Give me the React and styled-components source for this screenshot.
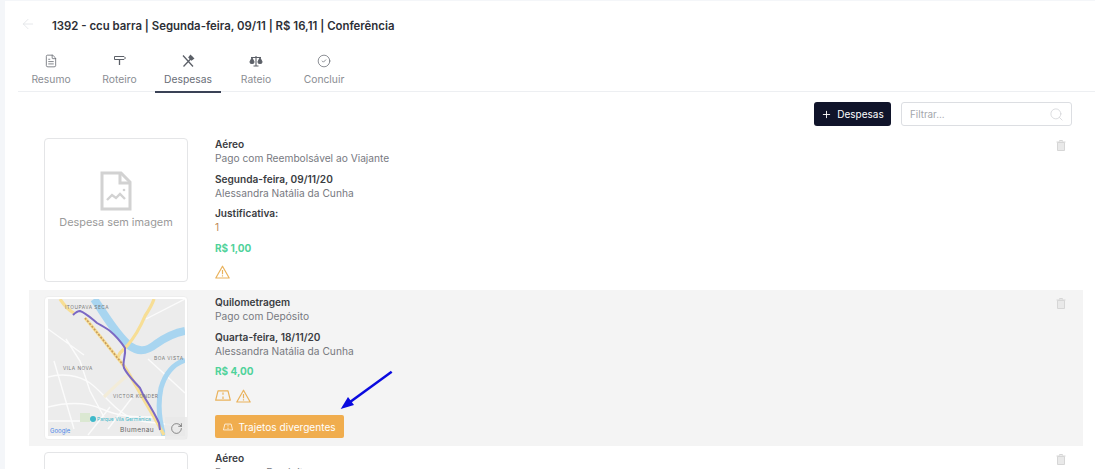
import React from "react";
import styled, { createGlobalStyle } from "styled-components";
import { FileText, Search, Plus, ArrowLeft, CircleCheck, RotateCw } from "lucide-react";

const Global = createGlobalStyle`
  html, body { margin: 0; padding: 0; background: #f4f6f9; }
  body { font-family: "Inter", "Open Sans", sans-serif; overflow: hidden; }
`;

const Page = styled.div`
  width: 1095px;
  height: 469px;
  overflow: hidden;
  display: flex;
  justify-content: flex-end;
  padding-top: 1px;
  box-sizing: border-box;
`;

const Panel = styled.div`
  width: 1090px;
  background: #fff;
  flex-shrink: 0;
`;

const Header = styled.div`
  display: flex;
  align-items: center;
  height: 49px;
  box-sizing: border-box;
  padding: 1px 0 0 15px;
  gap: 16px;
`;

const BackArrow = styled(ArrowLeft)`
  color: #dfe2e6;
  margin-top: -5px;
`;

const Title = styled.h1`
  margin: 0;
  font-size: 11.4px;
  font-weight: 600;
  color: #2d2f36;
`;

const Tabs = styled.div`
  display: flex;
  margin-left: 13px;
  height: 41px;
  border-bottom: 1px solid #edeff2;
`;

const Tab = styled.div`
  width: ${(p) => p.$w}px;
  height: 43px;
  box-sizing: border-box;
  display: flex;
  flex-direction: column;
  align-items: center;
  gap: 5px;
  padding-top: 4px;
  font-size: 10.3px;
  color: ${(p) => (p.$active ? "#6a6e77" : "#8a8d93")};
  border-bottom: ${(p) => (p.$active ? "2px solid #3a4256" : "none")};
  svg { color: #5c6068; }
`;

const Toolbar = styled.div`
  display: flex;
  justify-content: flex-end;
  align-items: center;
  gap: 10px;
  padding: 10px 23px 0 0;
  height: 24px;
  margin-bottom: 6px;
`;

const AddButton = styled.div`
  width: 77px;
  height: 24px;
  background: #10142a;
  border-radius: 3px;
  color: #fff;
  display: flex;
  align-items: center;
  justify-content: center;
  gap: 5px;
  font-size: 10px;
`;

const Filter = styled.div`
  width: 171px;
  height: 24px;
  border: 1px solid #dcdee2;
  border-radius: 3px;
  display: flex;
  align-items: center;
  justify-content: space-between;
  padding: 0 7px 0 8px;
  font-size: 9.8px;
  color: #a3a6ab;
  box-sizing: border-box;
  svg { color: #d0d2d5; }
`;

const Row = styled.div`
  display: flex;
  position: relative;
  margin-left: 24px;
  width: 1054px;
  height: ${(p) => p.$h}px;
  background: ${(p) => (p.$shaded ? "#f4f4f4" : "transparent")};
  padding-left: 15px;
  box-sizing: border-box;
  gap: 27px;
`;

const Thumb = styled.div`
  width: 144px;
  height: 144px;
  flex-shrink: 0;
  margin-top: 6px;
  background: #fff;
  border: 1px solid #e4e5e7;
  border-radius: 4px;
  box-sizing: border-box;
  display: flex;
  flex-direction: column;
  align-items: center;
  justify-content: center;
  gap: 4px;
  font-size: 10.9px;
  color: #9a9a9a;
  padding-bottom: 21px;
`;

const MapThumb = styled(Thumb)`
  display: block;
  position: relative;
  padding: 2px 0 0 3px;
  border-color: #eeeeee;
`;

const Info = styled.div`
  padding-top: 5px;
  display: flex;
  flex-direction: column;
`;

const Group = styled.div`
  display: flex;
  flex-direction: column;
  margin-bottom: 6.5px;
  line-height: 14px;
`;

const Strong = styled.div`
  font-size: 10.1px;
  font-weight: 600;
  color: #3a3c42;
`;

const Light = styled.div`
  font-size: 10.2px;
  color: ${(p) => p.$color || "#77797f"};
`;

const Price = styled.div`
  font-size: 10px;
  font-weight: 700;
  color: #4fd29a;
  line-height: 14px;
  margin-bottom: 10px;
`;

const Flags = styled.div`
  display: flex;
  align-items: center;
  gap: 5px;
  height: 15px;
  color: #e9b25c;
`;

const WarnButton = styled.div`
  margin-top: 12px;
  width: 129px;
  height: 23px;
  background: #f0ad4e;
  border-radius: 2px;
  display: flex;
  align-items: center;
  justify-content: center;
  gap: 5px;
  font-size: 10.1px;
  color: #fff;
`;

const TrashButton = styled.div`
  position: absolute;
  right: 17px;
  top: 8px;
  line-height: 0;
`;

const ReloadBadge = styled.div`
  position: absolute;
  right: 0;
  bottom: 0;
  width: 22px;
  height: 22px;
  background: rgba(233, 233, 233, 0.85);
  color: #555;
  display: flex;
  align-items: center;
  justify-content: center;
`;

const Callout = styled.svg`
  position: absolute;
  left: 309px;
  top: 79px;
  z-index: 2;
`;

const SignIcon = () => (
  <svg width="14" height="14" viewBox="0 0 14 14" fill="none" stroke="currentColor" strokeWidth="1">
    <path d="M1.5 2.5h9.5l1.5 1.5-1.5 1.5H1.5z" />
    <path d="M6.5 5.5v5.5" strokeWidth="1.3" />
  </svg>
);

const ToolsIcon = () => (
  <svg width="14" height="14" viewBox="0 0 14 14" fill="none" stroke="currentColor" strokeWidth="1.3">
    <path d="M2 1.5l10 11M11.5 3 2.5 12.5" />
    <path d="M9.5 1.5 12.5 4.5 10.5 6 8 3.5z" fill="currentColor" />
  </svg>
);

const ScaleIcon = () => (
  <svg width="14" height="14" viewBox="0 0 14 14" fill="none" stroke="currentColor" strokeWidth="1.1">
    <path d="M2 3.5h10M7 2v10M4.5 12h5" />
    <path d="M3 4 1 8c0 2 4 2 4 0z" fill="currentColor" />
    <path d="M11 4 9 8c0 2 4 2 4 0z" fill="currentColor" />
  </svg>
);

const NoImageIcon = () => (
  <svg width="32" height="40" viewBox="0 0 32 40" fill="none" stroke="#d2d2d2" strokeWidth="3">
    <path d="M2 2h19l9 9v27H2z" />
    <path d="M20 2v10h10" />
    <path d="M7 29l5-5 4 3 4-4 5 5" strokeWidth="2.4" />
    <circle cx="24" cy="19" r="1.3" fill="#d2d2d2" strokeWidth="0" />
  </svg>
);

const WarnIcon = () => (
  <svg width="15" height="14" viewBox="0 0 15 14" fill="none" stroke="currentColor" strokeWidth="1.2">
    <path d="M7.5 1.2 14.2 13H.8z" strokeLinejoin="round" />
    <path d="M7.5 5v4.2M7.5 10.2v1.2" />
  </svg>
);

const RoadIcon = ({ w = 16, h = 11 }) => (
  <svg width={w} height={h} viewBox="0 0 16 11" fill="none" stroke="currentColor" strokeWidth="1.2">
    <path d="M3 .8h10l2.3 9.4H.7z" strokeLinejoin="round" />
    <path d="M8 2.5v2.2M8 6.5v2.5" />
  </svg>
);

const TrashIcon = () => (
  <svg width="10" height="11" viewBox="0 0 10 11" fill="#e9e9e9" stroke="#d6d6d6" strokeWidth="1">
    <path d="M1.5 2.5h7v8h-7z" />
    <path d="M.5 2h9M3.5 1.5V.5h3v1" fill="none" />
  </svg>
);

const RouteMap = () => (
  <svg width="137" height="137" viewBox="0 0 137 137" fontFamily="Inter, sans-serif">
    <rect width="137" height="137" fill="#ececec" />
    <g fill="none" stroke="#fbfbfb" strokeWidth="1.4">
      <path d="M0 78c14-4 30-2 42 6s26 30 44 36 30 2 51 10" />
      <path d="M0 108c16-4 36-6 54 2s32 8 52 8" />
      <path d="M18 40l14 22 10 30 14 26M0 30l36 26M100 60l37 34M98 20l39-20M6 62l20 68" />
      <path d="M60 130 86 96M40 136l22-28M0 122h44" />
    </g>
    <rect x="32" y="114" width="10" height="9" fill="#dbe8d2" />
    <path d="M46 0c10 14 22 36 36 47 8 6 16 6 26-2 10-7 18-11 29-13" fill="none" stroke="#a8d5f0" strokeWidth="8" />
    <path d="M137 61c-12 4-20 14-24 28-3 14-2 32 3 48" fill="none" stroke="#a8d5f0" strokeWidth="5" />
    <g fill="none" stroke="#f7de95" strokeWidth="3.2">
      <path d="M12 0c4 6 8 11 14 14" />
      <path d="M37 19c12 14 26 32 39 48" />
      <path d="M76 67c8 12 14 24 20 34s14 24 20 35" />
      <path d="M106 0c-2 6-5 11-9 17-5 12-11 22-18 30l-7 7-3 6" />
      <path d="M56 98c8-8 14-14 24-22" stroke="#f3ecd8" />
    </g>
    <path d="M37 19c12 14 26 32 39 48" fill="none" stroke="#c79a5e" strokeWidth="1.6" strokeDasharray="2 1.5" />
    <path d="M25 16c3-3 5-4 7-4 6 2 12 8 17 12 5 3 9 5 13 8 6 5 11 11 15 17 1 8-3 14-1 20 4 8 11 14 16 20 2 4 3 7 5 10 5 8 10 16 14 25l1 7" fill="none" stroke="#7b68c4" strokeWidth="2" />
    <circle cx="45" cy="120" r="3" fill="#3fb8c9" />
    <text x="17" y="10" fontSize="4.8" letterSpacing=".5" fill="#777">ITOUPAVA SECA</text>
    <text x="15" y="71" fontSize="4.8" letterSpacing=".5" fill="#777">VILA NOVA</text>
    <text x="106" y="61" fontSize="4.8" letterSpacing=".5" fill="#777">BOA VISTA</text>
    <text x="65" y="99" fontSize="4.8" letterSpacing=".5" fill="#777">VICTOR KONDER</text>
    <text x="49" y="122" fontSize="5" fill="#3fb8c9">Parque Vila Germânica</text>
    <text x="72" y="133" fontSize="6.6" letterSpacing=".4" fill="#666">Blumenau</text>
    <text x="2" y="134" fontSize="6" fill="#4a86e8">Google</text>
  </svg>
);

const App = () => (
  <Page>
    <Global />
    <Panel>
      <Header>
        <BackArrow size={16} strokeWidth={1.2} />
        <Title>1392 - ccu barra | Segunda-feira, 09/11 | R$ 16,11 | Conferência</Title>
      </Header>
      <Tabs>
        <Tab $w={66}><FileText size={14} strokeWidth={1.3} />Resumo</Tab>
        <Tab $w={71}><SignIcon />Roteiro</Tab>
        <Tab $w={66} $active><ToolsIcon />Despesas</Tab>
        <Tab $w={70}><ScaleIcon />Rateio</Tab>
        <Tab $w={66}><CircleCheck size={14} strokeWidth={1.2} />Concluir</Tab>
      </Tabs>
      <Toolbar>
        <AddButton><Plus size={11} />Despesas</AddButton>
        <Filter>Filtrar...<Search size={15} strokeWidth={1.2} /></Filter>
      </Toolbar>
      <Row $h={158}>
        <Thumb><NoImageIcon />Despesa sem imagem</Thumb>
        <Info>
          <Group><Strong>Aéreo</Strong><Light>Pago com Reembolsável ao Viajante</Light></Group>
          <Group><Strong>Segunda-feira, 09/11/20</Strong><Light>Alessandra Natália da Cunha</Light></Group>
          <Group><Strong>Justificativa:</Strong><Light $color="#c08a55">1</Light></Group>
          <Price>R$ 1,00</Price>
          <Flags><WarnIcon /></Flags>
        </Info>
        <TrashButton><TrashIcon /></TrashButton>
      </Row>
      <Row $h={156} $shaded>
        <MapThumb>
          <RouteMap />
          <ReloadBadge><RotateCw size={13} strokeWidth={1.2} /></ReloadBadge>
        </MapThumb>
        <Info>
          <Group><Strong>Quilometragem</Strong><Light>Pago com Depósito</Light></Group>
          <Group><Strong>Quarta-feira, 18/11/20</Strong><Light>Alessandra Natália da Cunha</Light></Group>
          <Price>R$ 4,00</Price>
          <Flags><RoadIcon /><WarnIcon /></Flags>
          <WarnButton><RoadIcon w={10} h={8} />Trajetos divergentes</WarnButton>
        </Info>
        <TrashButton><TrashIcon /></TrashButton>
        <Callout width="56" height="44" viewBox="0 0 56 44">
          <path d="M53.7 2.7 10 34.5" stroke="#0a0adf" strokeWidth="2.5" fill="none" />
          <path d="M2.7 40 10 28 16 36z" fill="#0a0adf" />
        </Callout>
      </Row>
      <Row $h={60}>
        <Thumb />
        <Info>
          <Group><Strong>Aéreo</Strong><Light>Pago com Depósito</Light></Group>
        </Info>
        <TrashButton><TrashIcon /></TrashButton>
      </Row>
    </Panel>
  </Page>
);

export default App;
